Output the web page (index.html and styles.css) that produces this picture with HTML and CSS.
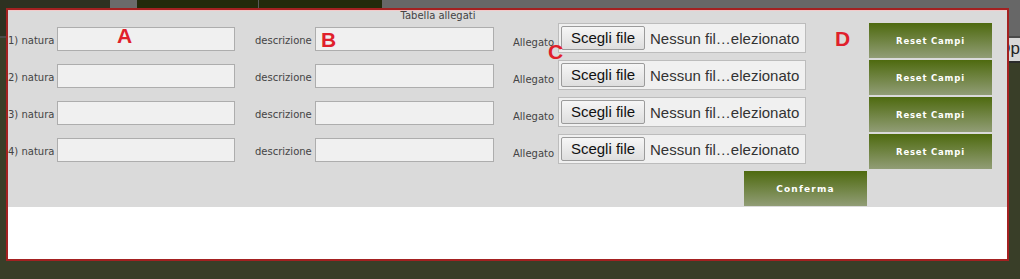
FILE: index.html
```html
<!DOCTYPE html>
<html lang="it">
<head>
  <meta charset="UTF-8" />
  <meta name="viewport" content="width=device-width, initial-scale=1.0" />
  <title>Tabella allegati</title>
  <link rel="stylesheet" href="styles.css">
</head>
<body>
  <div class="topbar">
    <div class="seg seg-olive"></div>
    <div class="seg seg-grey"></div>
    <div class="seg seg-dark"></div>
    <div class="seg seg-dark2"></div>
    <div class="seg seg-rest"></div>
  </div>
  <div class="toolbar">
    <span class="tool-tab">Op</span>
  </div>

  <div class="modal">
    <div class="modal-body">
      <div class="modal-title">Tabella allegati</div>

      <div class="row">
        <span class="lbl lbl-natura">1) natura</span>
        <input class="field field-a" type="text">
        <span class="lbl lbl-descr">descrizione</span>
        <input class="field field-b" type="text">
        <span class="lbl lbl-allegato">Allegato</span>
        <div class="file-box"><span class="file-btn">Scegli file</span><span class="file-name">Nessun fil…elezionato</span></div>
        <button class="green-btn reset-btn">Reset Campi</button>
      </div>
      <div class="row">
        <span class="lbl lbl-natura">2) natura</span>
        <input class="field field-a" type="text">
        <span class="lbl lbl-descr">descrizione</span>
        <input class="field field-b" type="text">
        <span class="lbl lbl-allegato">Allegato</span>
        <div class="file-box"><span class="file-btn">Scegli file</span><span class="file-name">Nessun fil…elezionato</span></div>
        <button class="green-btn reset-btn">Reset Campi</button>
      </div>
      <div class="row">
        <span class="lbl lbl-natura">3) natura</span>
        <input class="field field-a" type="text">
        <span class="lbl lbl-descr">descrizione</span>
        <input class="field field-b" type="text">
        <span class="lbl lbl-allegato">Allegato</span>
        <div class="file-box"><span class="file-btn">Scegli file</span><span class="file-name">Nessun fil…elezionato</span></div>
        <button class="green-btn reset-btn">Reset Campi</button>
      </div>
      <div class="row">
        <span class="lbl lbl-natura">4) natura</span>
        <input class="field field-a" type="text">
        <span class="lbl lbl-descr">descrizione</span>
        <input class="field field-b" type="text">
        <span class="lbl lbl-allegato">Allegato</span>
        <div class="file-box"><span class="file-btn">Scegli file</span><span class="file-name">Nessun fil…elezionato</span></div>
        <button class="green-btn reset-btn">Reset Campi</button>
      </div>

      <div class="confirm-row">
        <button class="green-btn confirm-btn">Conferma</button>
      </div>
    </div>
    <div class="modal-foot"></div>

    <span class="mark mark-a">A</span>
    <span class="mark mark-b">B</span>
    <span class="mark mark-c">C</span>
    <span class="mark mark-d">D</span>
  </div>
</body>
</html>
```

FILE: styles.css
```css
body {
  margin: 0;
  background: #393e28;
  font-family: 'DejaVu Sans', sans-serif;
  position: relative;
  overflow: hidden;
  height: 279px;
}
.topbar {
  display: flex;
  height: 36px;
}
.seg {
  height: 100%;
}
.seg-olive {
  width: 110px;
  background: #2d3121;
}
.seg-grey {
  width: 27px;
  background: #6b6b6b;
}
.seg-dark {
  width: 121px;
  background: #222a0b;
  border-right: 1px solid #5a5a5a;
}
.seg-dark2 {
  width: 123px;
  background: #222a0b;
}
.seg-rest {
  flex: 1;
  background: #676767;
}
.toolbar {
  display: flex;
  justify-content: flex-end;
  height: 27px;
  border-top: 2px solid #4a4a4a;
  box-sizing: border-box;
}
.tool-tab {
  width: 40px;
  padding: 3px 0 4px;
  background: #d8d8d8;
  border-bottom: 2px solid #2b2b2b;
  font-family: 'Liberation Sans', sans-serif;
  font-size: 17px;
  color: #222;
  line-height: 16px;
  text-align: right;
}

.modal {
  position: absolute;
  left: 6px;
  top: 8px;
  width: 1003px;
  height: 253px;
  box-sizing: border-box;
  border: 2px solid #a32121;
  background: #fff;
}
.modal-body {
  background: #dadada;
  height: 197px;
  box-shadow: inset 0 1px 0 #f3caca;
}
.modal-title {
  width: 860px;
  text-align: center;
  font-size: 10px;
  line-height: 12px;
  color: #444;
  height: 12px;
}
.row {
  display: flex;
  align-items: flex-start;
  height: 37px;
}
.lbl {
  font-size: 10px;
  line-height: 37px;
  color: #444;
  white-space: nowrap;
}
.lbl-natura {
  width: 49px;
}
.lbl-descr {
  margin-left: 20px;
  width: 60px;
}
.lbl-allegato {
  margin-left: 19px;
  width: 45px;
  padding-top: 2px;
}
.field {
  box-sizing: border-box;
  height: 24px;
  margin: 5px 0 0;
  padding: 0 4px;
  border: 1px solid #adadad;
  background: #f0f0f0;
  border-radius: 0;
}
.field-a {
  width: 178px;
}
.field-b {
  width: 179px;
}
.file-box {
  box-sizing: border-box;
  width: 248px;
  height: 30px;
  display: flex;
  align-items: center;
  gap: 5px;
  padding-left: 2px;
  margin-top: 1px;
  border: 1px solid #bcbcbc;
  background: #f0f0f0;
  font-family: 'Liberation Sans', sans-serif;
  font-size: 15px;
  color: #333;
}
.file-btn {
  box-sizing: border-box;
  width: 84px;
  height: 24px;
  line-height: 22px;
  text-align: center;
  border: 1px solid #9b9b9b;
  border-radius: 2px;
  background: linear-gradient(to bottom, #f6f6f6, #dedede);
  color: #111;
}
.file-name {
  white-space: nowrap;
}
.green-btn {
  box-sizing: border-box;
  width: 123px;
  height: 35px;
  border: none;
  margin: 0;
  padding: 0;
  background: linear-gradient(to bottom, #4e6a0f, #919d76);
  color: #fff;
  font-family: 'DejaVu Sans', sans-serif;
  font-weight: bold;
  font-size: 8.5px;
  letter-spacing: 0.8px;
}
.reset-btn {
  margin: 1px 0 0 63px;
}
.confirm-row {
  display: flex;
  padding-left: 736px;
  padding-top: 1px;
}
.confirm-btn {
  font-size: 9px;
  letter-spacing: 1.2px;
}

.mark {
  position: absolute;
  font-family: 'Liberation Sans', sans-serif;
  font-weight: bold;
  font-size: 21px;
  line-height: 1;
  color: #e0202b;
}
.mark-a { left: 109px; top: 15px; }
.mark-b { left: 313px; top: 19px; }
.mark-c { left: 540px; top: 31px; }
.mark-d { left: 827px; top: 18px; }
```
